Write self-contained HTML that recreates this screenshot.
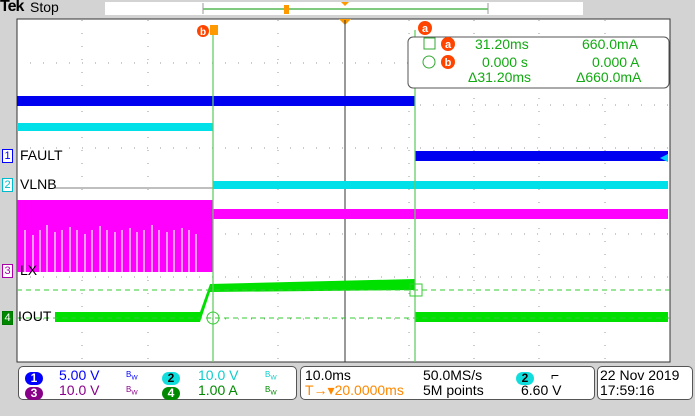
<!DOCTYPE html>
<html><head><meta charset="utf-8"><style>
body{margin:0;width:695px;height:416px;background:#d3d3d3;overflow:hidden;font-family:"Liberation Sans",sans-serif;position:relative}
.t{position:absolute;white-space:nowrap}
.pan{position:absolute;top:366px;height:32px;background:#fff;border:1px solid #555;border-radius:5px}
.pan .t{font-size:14px}
.b{display:inline-block;border-radius:7px;width:18px;height:13px;text-align:center;font-size:12px;line-height:13px;font-weight:bold}
</style></head><body>
<div class="t" style="left:0;top:-2px;font-size:16px;font-weight:bold;letter-spacing:-1px">Tek</div>
<div class="t" style="left:30px;top:-1px;font-size:14px">Stop</div>
<div style="position:absolute;left:105px;top:2px;width:478px;height:13px;background:#fff"></div>
<svg width="695" height="416" style="position:absolute;left:0;top:0">
<line x1="203" y1="9" x2="488" y2="9" stroke="#3a3" stroke-width="1.2"/>
<line x1="203" y1="3" x2="203" y2="14" stroke="#999"/><line x1="488" y1="3" x2="488" y2="14" stroke="#999"/>
<rect x="284" y="5" width="5" height="9" fill="#f90"/>
<polygon points="341,2 349,2 345,6" fill="#f90"/>
<rect x="17" y="19" width="653" height="343" fill="#fff" stroke="#333"/>
<polygon points="339,19 351,19 345,25" fill="#f90"/>
<g stroke="#999" stroke-width="1" stroke-dasharray="1,12">
<line x1="82" y1="20" x2="82" y2="362"/><line x1="148" y1="20" x2="148" y2="362"/><line x1="278" y1="20" x2="278" y2="362"/><line x1="409" y1="20" x2="409" y2="362"/><line x1="474" y1="20" x2="474" y2="362"/><line x1="539" y1="20" x2="539" y2="362"/><line x1="605" y1="20" x2="605" y2="362"/>
<line x1="17" y1="63" x2="670" y2="63"/><line x1="17" y1="105" x2="670" y2="105"/><line x1="17" y1="148" x2="670" y2="148"/><line x1="17" y1="234" x2="670" y2="234"/><line x1="17" y1="277" x2="670" y2="277"/><line x1="17" y1="319" x2="670" y2="319"/>
</g>
<line x1="345" y1="20" x2="345" y2="362" stroke="#333"/>
<line x1="55" y1="188" x2="213" y2="188" stroke="#555" stroke-width="0.8"/>
<rect x="17" y="96" width="398" height="10" fill="#0000f0"/>
<rect x="415" y="151" width="253" height="10" fill="#0000f0"/>
<line x1="415" y1="96" x2="415" y2="161" stroke="#0000f0"/>
<rect x="17" y="123" width="196" height="8" fill="#00e0e8"/>
<rect x="213" y="181" width="455" height="8" fill="#00e0e8"/>
<rect x="17" y="200" width="196" height="72" fill="#f0f"/>
<g stroke="#fff" stroke-width="1.2">
<path d="M25 230V272M33 235V272M40 230V272M47 225V272M55 232V272M62 230V272M70 227V272M77 230V272M85 234V272M92 230V272M100 226V272M107 230V272M115 232V272M122 230V272M130 228V272M137 232V272M144 230V272M152 225V272M159 230V272M167 232V272M174 230V272M182 228V272M189 230V272M196 234V272"/>
</g>
<rect x="213" y="209" width="455" height="10" fill="#f0f"/>
<polygon points="55,312 200,312 210,284 415,279 415,290 210,292 200,322 55,322" fill="#00e000"/>
<rect x="415" y="312" width="253" height="10" fill="#00e000"/>
<line x1="17" y1="290" x2="670" y2="290" stroke="#3c3" stroke-dasharray="5,4"/>
<line x1="17" y1="318" x2="670" y2="318" stroke="#3c3" stroke-dasharray="5,4"/>
<line x1="213" y1="30" x2="213" y2="362" stroke="#6c6" stroke-width="1.3"/>
<line x1="415" y1="30" x2="415" y2="362" stroke="#6c6" stroke-width="1.3"/>
<circle cx="213" cy="318" r="6" fill="none" stroke="#3c3"/>
<rect x="410" y="284" width="12" height="12" fill="none" stroke="#3c3"/>
<polygon points="660,158 668,154 668,162" fill="#0cf"/>
<rect x="408" y="37" width="261" height="51" rx="5" fill="#fff" stroke="#555"/>
<circle cx="203" cy="31" r="6" fill="#f40"/><rect x="210" y="25" width="8" height="10" fill="#f90"/>
<circle cx="425" cy="28" r="7" fill="#f40"/>
<rect x="424" y="38" width="11" height="11" fill="none" stroke="#3a3"/>
<circle cx="448" cy="44" r="7" fill="#f40"/>
<circle cx="429" cy="62" r="6" fill="none" stroke="#3a3"/>
<circle cx="448" cy="62" r="7" fill="#f40"/>
<text x="203" y="35" font-size="10" fill="#fff" text-anchor="middle" font-family="Liberation Sans" font-weight="bold">b</text>
<text x="425" y="32" font-size="11" fill="#fff" text-anchor="middle" font-family="Liberation Sans" font-weight="bold">a</text>
<text x="448" y="48" font-size="11" fill="#fff" text-anchor="middle" font-family="Liberation Sans" font-weight="bold">a</text>
<text x="448" y="66" font-size="11" fill="#fff" text-anchor="middle" font-family="Liberation Sans" font-weight="bold">b</text>
</svg>
<div class="t" style="left:475px;top:36px;font-size:14px;color:#1a1">31.20ms</div>
<div class="t" style="left:582px;top:36px;font-size:14px;color:#1a1">660.0mA</div>
<div class="t" style="left:482px;top:54px;font-size:14px;color:#1a1">0.000 s</div>
<div class="t" style="left:592px;top:54px;font-size:14px;color:#1a1">0.000 A</div>
<div class="t" style="left:468px;top:69px;font-size:14px;color:#1a1">Δ31.20ms</div>
<div class="t" style="left:576px;top:69px;font-size:14px;color:#1a1">Δ660.0mA</div>
<div class="t" style="left:2px;top:149px;font-size:11px;color:#00f;border:1px solid #00f;background:#fff;width:9px;height:12px;line-height:12px;text-align:center">1</div>
<div class="t" style="left:20px;top:147px;font-size:14px">FAULT</div>
<div class="t" style="left:2px;top:178px;font-size:11px;color:#0bc;border:1px solid #0bc;background:#fff;width:9px;height:12px;line-height:12px;text-align:center">2</div>
<div class="t" style="left:20px;top:176px;font-size:14px">VLNB</div>
<div class="t" style="left:2px;top:264px;font-size:11px;color:#a0a;border:1px solid #a0a;background:#fff;width:9px;height:12px;line-height:12px;text-align:center">3</div>
<div class="t" style="left:20px;top:262px;font-size:14px">LX</div>
<div class="t" style="left:2px;top:311px;font-size:11px;color:#fff;border:1px solid #070;background:#080;width:9px;height:12px;line-height:12px;text-align:center">4</div>
<div class="t" style="left:18px;top:308px;font-size:14px">IOUT</div>
<div class="pan" style="left:18px;width:277px">
<div class="t" style="left:6px;top:2px"><span class="b" style="background:#00f;color:#fff">1</span></div>
<div class="t" style="left:40px;top:0px;color:#00f">5.00 V</div>
<div class="t" style="left:107px;top:3px;font-size:8px;color:#00f">B<sub>W</sub></div>
<div class="t" style="left:143px;top:2px"><span class="b" style="background:#1dd;color:#000">2</span></div>
<div class="t" style="left:179px;top:0px;color:#1cc">10.0 V</div>
<div class="t" style="left:246px;top:3px;font-size:8px;color:#1cc">B<sub>W</sub></div>
<div class="t" style="left:6px;top:17px"><span class="b" style="background:#808;color:#fff">3</span></div>
<div class="t" style="left:40px;top:15px;color:#808">10.0 V</div>
<div class="t" style="left:107px;top:18px;font-size:8px;color:#808">B<sub>W</sub></div>
<div class="t" style="left:143px;top:17px"><span class="b" style="background:#080;color:#fff">4</span></div>
<div class="t" style="left:179px;top:15px;color:#080">1.00 A</div>
<div class="t" style="left:246px;top:18px;font-size:8px;color:#080">B<sub>W</sub></div>
</div>
<div class="pan" style="left:300px;width:293px">
<div class="t" style="left:4px;top:0px">10.0ms</div>
<div class="t" style="left:122px;top:0px">50.0MS/s</div>
<div class="t" style="left:215px;top:2px"><span class="b" style="background:#1dd;color:#000">2</span></div>
<div class="t" style="left:250px;top:0px;font-weight:bold">⌐</div>
<div class="t" style="left:4px;top:15px;color:#f80">T→▾20.0000ms</div>
<div class="t" style="left:122px;top:15px">5M points</div>
<div class="t" style="left:220px;top:15px">6.60 V</div>
</div>
<div class="pan" style="left:597px;width:94px">
<div class="t" style="left:2px;top:0px">22 Nov 2019</div>
<div class="t" style="left:2px;top:15px">17:59:16</div>
</div>
</body></html>
